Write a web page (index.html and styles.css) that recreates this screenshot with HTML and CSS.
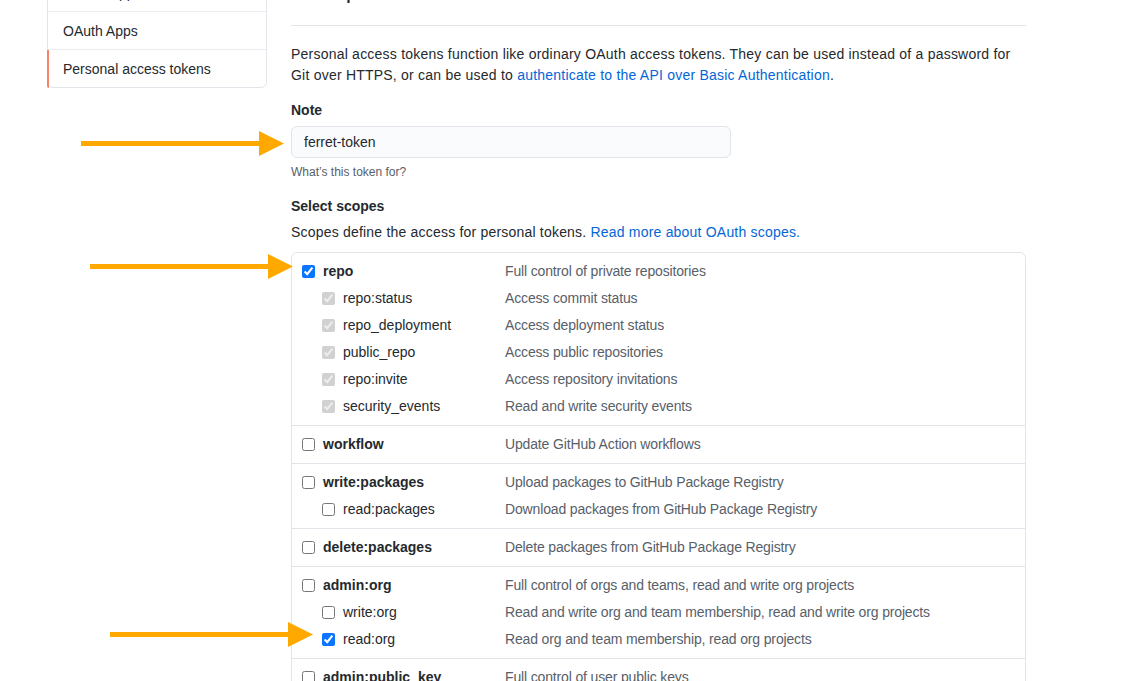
FILE: index.html
```html
<!DOCTYPE html>
<html lang="en">
<head>
<meta charset="utf-8">
<title>New personal access token</title>
<link rel="stylesheet" href="styles.css">
</head>
<body>
<div class="layout">
  <nav class="sidebar">
    <a class="menu-item" href="#">GitHub Apps</a>
    <a class="menu-item" href="#">OAuth Apps</a>
    <a class="menu-item selected" href="#">Personal access tokens</a>
  </nav>
  <main class="main">
    <div class="subhead"><h2 class="subhead-heading">New personal access token</h2></div>
    <p class="intro">Personal access tokens function like ordinary OAuth access tokens. They can be used instead of a password for Git over HTTPS, or can be used to <a href="#">authenticate to the API over Basic Authentication</a>.</p>

    <div class="form-group">
      <label class="form-label" for="note">Note</label>
      <input class="form-control" id="note" type="text" value="ferret-token">
      <p class="note">What’s this token for?</p>
    </div>

    <div class="form-group">
      <div class="form-label">Select scopes</div>
      <p class="scopes-intro">Scopes define the access for personal tokens. <a href="#">Read more about OAuth scopes.</a></p>

      <div class="scopes">
        <div class="scope-group">
          <label class="scope-row"><span class="scope-check"><input type="checkbox" checked><span class="scope-name">repo</span></span><span class="scope-desc">Full control of private repositories</span></label>
          <label class="scope-row sub"><span class="scope-check"><input type="checkbox" checked disabled><span class="scope-name">repo:status</span></span><span class="scope-desc">Access commit status</span></label>
          <label class="scope-row sub"><span class="scope-check"><input type="checkbox" checked disabled><span class="scope-name">repo_deployment</span></span><span class="scope-desc">Access deployment status</span></label>
          <label class="scope-row sub"><span class="scope-check"><input type="checkbox" checked disabled><span class="scope-name">public_repo</span></span><span class="scope-desc">Access public repositories</span></label>
          <label class="scope-row sub"><span class="scope-check"><input type="checkbox" checked disabled><span class="scope-name">repo:invite</span></span><span class="scope-desc">Access repository invitations</span></label>
          <label class="scope-row sub"><span class="scope-check"><input type="checkbox" checked disabled><span class="scope-name">security_events</span></span><span class="scope-desc">Read and write security events</span></label>
        </div>
        <div class="scope-group">
          <label class="scope-row"><span class="scope-check"><input type="checkbox"><span class="scope-name">workflow</span></span><span class="scope-desc">Update GitHub Action workflows</span></label>
        </div>
        <div class="scope-group">
          <label class="scope-row"><span class="scope-check"><input type="checkbox"><span class="scope-name">write:packages</span></span><span class="scope-desc">Upload packages to GitHub Package Registry</span></label>
          <label class="scope-row sub"><span class="scope-check"><input type="checkbox"><span class="scope-name">read:packages</span></span><span class="scope-desc">Download packages from GitHub Package Registry</span></label>
        </div>
        <div class="scope-group">
          <label class="scope-row"><span class="scope-check"><input type="checkbox"><span class="scope-name">delete:packages</span></span><span class="scope-desc">Delete packages from GitHub Package Registry</span></label>
        </div>
        <div class="scope-group">
          <label class="scope-row"><span class="scope-check"><input type="checkbox"><span class="scope-name">admin:org</span></span><span class="scope-desc">Full control of orgs and teams, read and write org projects</span></label>
          <label class="scope-row sub"><span class="scope-check"><input type="checkbox"><span class="scope-name">write:org</span></span><span class="scope-desc">Read and write org and team membership, read and write org projects</span></label>
          <label class="scope-row sub"><span class="scope-check"><input type="checkbox" checked><span class="scope-name">read:org</span></span><span class="scope-desc">Read org and team membership, read org projects</span></label>
        </div>
        <div class="scope-group">
          <label class="scope-row"><span class="scope-check"><input type="checkbox"><span class="scope-name">admin:public_key</span></span><span class="scope-desc">Full control of user public keys</span></label>
          <label class="scope-row sub"><span class="scope-check"><input type="checkbox"><span class="scope-name">write:public_key</span></span><span class="scope-desc">Write user public keys</span></label>
          <label class="scope-row sub"><span class="scope-check"><input type="checkbox"><span class="scope-name">read:public_key</span></span><span class="scope-desc">Read user public keys</span></label>
        </div>
      </div>
    </div>
  </main>
</div>

<svg class="arrow arrow-note" viewBox="0 0 203 25" width="203" height="25" aria-hidden="true"><rect x="0" y="10" width="180" height="5"/><polygon points="178,0 203,12.5 178,25"/></svg>
<svg class="arrow arrow-repo" viewBox="0 0 203 25" width="203" height="25" aria-hidden="true"><rect x="0" y="10" width="180" height="5"/><polygon points="178,0 203,12.5 178,25"/></svg>
<svg class="arrow arrow-org" viewBox="0 0 203 25" width="203" height="25" aria-hidden="true"><rect x="0" y="10" width="180" height="5"/><polygon points="178,0 203,12.5 178,25"/></svg>
</body>
</html>
```

FILE: styles.css
```css
html, body {
  margin: 0;
  padding: 0;
  background: #ffffff;
}

body {
  font-family: "Liberation Sans", Arial, sans-serif;
  font-size: 14px;
  line-height: 21px;
  color: #24292e;
  overflow: hidden;
}

a {
  color: #0366d6;
  text-decoration: none;
}

.layout {
  display: flex;
  align-items: flex-start;
  gap: 24px;
  padding-left: 47px;
  margin-top: -28px;
}

/* Sidebar menu */
.sidebar {
  width: 220px;
  flex: none;
  box-sizing: border-box;
  margin-top: 1px;
  border: 1px solid #e1e4e8;
  border-radius: 6px;
  background: #fff;
}

.menu-item {
  display: block;
  position: relative;
  padding: 9px 15px 7px;
  line-height: 21px;
  color: #24292e;
  border-top: 1px solid #eaecef;
}

.menu-item:first-child {
  border-top: 0;
}

.menu-item.selected::before {
  content: "";
  position: absolute;
  left: -1px;
  top: 0;
  bottom: -1px;
  width: 2px;
  background: #f9826c;
  border-bottom-left-radius: 2px;
}

/* Main column */
.main {
  width: 735px;
  flex: none;
}

.subhead {
  border-bottom: 1px solid #e1e4e8;
  padding-bottom: 17px;
  margin-bottom: 18px;
}

.subhead-heading {
  margin: 0;
  font-size: 24px;
  font-weight: 400;
  line-height: 36px;
}

.intro {
  margin: 0;
  letter-spacing: 0.22px;
}

.form-group {
  margin-top: 14px;
}

.form-group + .form-group {
  margin-top: 15px;
}

.form-label {
  display: block;
  font-weight: 700;
  line-height: 21px;
  margin-bottom: 5px;
}

.form-control {
  display: block;
  box-sizing: border-box;
  width: 440px;
  height: 32px;
  padding: 5px 12px;
  font-family: inherit;
  font-size: 14px;
  line-height: 20px;
  color: #24292e;
  background: #fafbfc;
  border: 1px solid #e1e4e8;
  border-radius: 6px;
  outline: none;
}

.note {
  margin: 5px 0 0;
  font-size: 12px;
  line-height: 18px;
  color: #586069;
}

.scopes-intro {
  margin: 2px 0 0;
  letter-spacing: 0.2px;
}

/* Scopes table */
.scopes {
  margin-top: 9px;
  border: 1px solid #e1e4e8;
  border-radius: 6px;
}

.scope-group {
  padding: 4px 10px 6px;
  border-top: 1px solid #e1e4e8;
}

.scope-group:first-child {
  border-top: 0;
}

.scope-row {
  display: flex;
  align-items: center;
  height: 27px;
  box-sizing: border-box;
  padding-top: 2px;
}

.scope-check {
  display: flex;
  align-items: center;
  gap: 8px;
  width: 203px;
  flex: none;
  box-sizing: border-box;
}

.scope-row.sub .scope-check {
  padding-left: 20px;
}

.scope-check input {
  width: 13px;
  height: 13px;
  margin: 0;
  accent-color: #0b75ff;
}

.scope-name {
  font-weight: 700;
  color: #24292e;
}

.scope-row.sub .scope-name {
  font-weight: 400;
}

.scope-desc {
  color: #586069;
  white-space: nowrap;
  letter-spacing: -0.15px;
}

/* Annotation arrows drawn over the page */
.arrow {
  position: absolute;
  fill: #ffa900;
}

.arrow-note {
  left: 81px;
  top: 131px;
}

.arrow-repo {
  left: 90px;
  top: 254px;
}

.arrow-org {
  left: 110px;
  top: 622px;
}
```
